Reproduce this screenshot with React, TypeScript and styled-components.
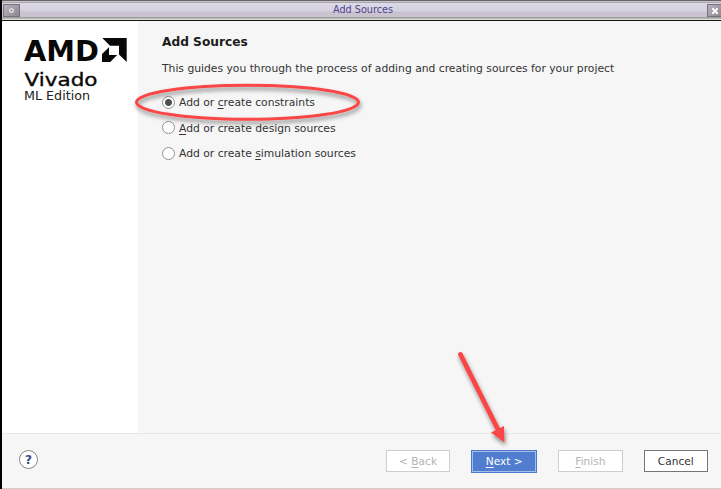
import React from "react";
import styled, { createGlobalStyle } from "styled-components";

const GlobalStyle = createGlobalStyle`
  * { box-sizing: border-box; }
  body { margin: 0; overflow: hidden; }
`;

const Window = styled.div`
  position: relative;
  display: flex;
  flex-direction: column;
  width: 721px;
  height: 489px;
  border-left: 2px solid #000;
  background: #f6f6f6;
  color: #333;
  font: 10.75px/16px "DejaVu Sans", sans-serif;
  white-space: nowrap;
`;

const TitleBar = styled.header`
  display: flex;
  justify-content: space-between;
  align-items: center;
  height: 21px;
  padding-bottom: 1px;
  background: linear-gradient(
    #666067 0 1px, #c9c5c9 1px 2px, #aaa6ad 2px 3px, #dcdae8 3px, #d3d1df 11px,
    #c8c3ce 12px, #c8c3ce 17px, #a19da1 17px 18px, #b8b5b5 18px 19px, #dedecf 19px 20px, #161616 20px
  );
`;

const WindowTitle = styled.h1`
  margin: 0;
  color: #51438f;
  font-size: 9.7px;
  font-weight: normal;
  line-height: 14px;
`;

const WindowButton = styled.button`
  display: flex;
  align-items: center;
  justify-content: center;
  width: 17px;
  height: 13px;
  margin: 1px 0 0 1px;
  padding: 0;
  border: 1px solid #77727e;
  background: linear-gradient(135deg, #b5b1bd, #8d8993);
`;

const CloseButton = styled(WindowButton)`
  width: 14px;
  border-right: 0;
`;

const Body = styled.main`
  display: flex;
  height: 412px;
`;

const Brand = styled.aside`
  width: 136px;
  background: #fff;
`;

const Content = styled.section`
  padding: 13px 0 0 24px;
`;

const Heading = styled.h2`
  margin: 0;
  color: #1c1c1c;
  font-size: 12.2px;
  line-height: 17px;
`;

const Intro = styled.p`
  margin: 10px 0 0;
`;

const Options = styled.div`
  display: flex;
  flex-direction: column;
  gap: 9.5px;
  margin-top: 17px;
`;

const Option = styled.label`
  display: flex;
  align-items: center;
  gap: 4px;
  height: 16px;
`;

const OptionText = styled.span`
  padding-top: 2px;
`;

const Radio = styled.span<{ $checked?: boolean }>`
  width: 13px;
  height: 13px;
  border: 1px solid #929292;
  border-radius: 50%;
  background: ${(p) => (p.$checked ? "radial-gradient(circle, #505050 0 3px, #fff 4px)" : "#fff")};
`;

const Key = styled.span`
  text-decoration: underline;
  text-decoration-thickness: 1px;
  text-underline-offset: 2px;
`;

const Footer = styled.footer`
  display: flex;
  justify-content: space-between;
  align-items: center;
  height: 56px;
  padding: 0 13px 0 17px;
  border-top: 1px solid #e7e7e7;
  border-bottom: 1px solid #cfcfcf;
`;

const Help = styled.button`
  display: flex;
  align-items: center;
  justify-content: center;
  width: 19px;
  height: 19px;
  margin-top: -3px;
  padding: 0;
  border: 1px solid #858585;
  border-radius: 50%;
  background: #fff;
  color: #344b79;
  font: bold 12px/16px "DejaVu Sans", sans-serif;
`;

const Actions = styled.div`
  display: flex;
  align-items: center;
  gap: 21px;
`;

const Button = styled.button<{ $kind?: "primary" | "disabled" }>`
  width: ${(p) => (p.$kind === "primary" ? 66 : 64.4)}px;
  height: ${(p) => (p.$kind === "primary" ? 23 : 22)}px;
  padding: 0;
  border: 1px solid ${(p) => (p.$kind === "primary" ? "#4a79cc" : p.$kind === "disabled" ? "#cecece" : "#777")};
  background: ${(p) => (p.$kind === "primary" ? "#507dd0" : "#fff")};
  box-shadow: ${(p) => (p.$kind === "primary" ? "inset 0 0 0 1px #a5bee9" : "none")};
  color: ${(p) => (p.$kind === "primary" ? "#fff" : p.$kind === "disabled" ? "#b3b3b3" : "#333")};
  font: 10.6px/18px "DejaVu Sans", sans-serif;
`;

const Annotations = styled.svg`
  position: absolute;
  left: -2px;
  top: 0;
  pointer-events: none;
`;

const Logo = () => (
  <svg width="136" height="90" viewBox="2 21 136 90" fill="#080808">
    <text x="24" y="61" fontFamily="DejaVu Sans, sans-serif" fontWeight="700" fontSize="29" textLength="75" lengthAdjust="spacingAndGlyphs">AMD</text>
    <path d="M102.3 38h24.4v24l-7.7-7.5v-8.8h-9zM109 47.3v7.7h8.2l-7 7h-8.2v-8z" />
    <text x="24.5" y="86" fontFamily="DejaVu Sans, sans-serif" fontSize="18.5" stroke="#080808" strokeWidth=".35" textLength="73" lengthAdjust="spacingAndGlyphs">Vivado</text>
    <text x="24" y="100" fontFamily="DejaVu Sans, sans-serif" fontSize="11.5" fill="#222" textLength="66" lengthAdjust="spacingAndGlyphs">ML Edition</text>
  </svg>
);

export default function App() {
  return (
    <Window>
      <GlobalStyle />
      <TitleBar>
        <WindowButton aria-label="Window menu">
          <svg width="7" height="7"><circle cx="3.5" cy="3.5" r="1.7" fill="#777" stroke="#eee" strokeWidth="1.3" /></svg>
        </WindowButton>
        <WindowTitle>Add Sources</WindowTitle>
        <CloseButton aria-label="Close">
          <svg width="8" height="8"><path d="m1.3 1.3 5.4 5.4m0-5.4-5.4 5.4" stroke="#fff" strokeWidth="2" /></svg>
        </CloseButton>
      </TitleBar>
      <Body>
        <Brand><Logo /></Brand>
        <Content>
          <Heading>Add Sources</Heading>
          <Intro>This guides you through the process of adding and creating sources for your project</Intro>
          <Options>
            <Option><Radio $checked /><OptionText>Add or <Key>c</Key>reate constraints</OptionText></Option>
            <Option><Radio /><OptionText><Key>A</Key>dd or create design sources</OptionText></Option>
            <Option><Radio /><OptionText>Add or create <Key>s</Key>imulation sources</OptionText></Option>
          </Options>
        </Content>
      </Body>
      <Footer>
        <Help aria-label="Help">?</Help>
        <Actions>
          <Button $kind="disabled">&lt; <Key>B</Key>ack</Button>
          <Button $kind="primary"><Key>N</Key>ext &gt;</Button>
          <Button $kind="disabled"><Key>F</Key>inish</Button>
          <Button>Cancel</Button>
        </Actions>
      </Footer>
      <Annotations width="721" height="489">
        <defs>
          <filter id="shadow" x="-20%" y="-20%" width="140%" height="150%">
            <feDropShadow dx="1" dy="3" stdDeviation="2" floodColor="#000" floodOpacity=".45" />
          </filter>
        </defs>
        <g filter="url(#shadow)">
          <ellipse cx="247.5" cy="102.3" rx="111" ry="17" fill="none" stroke="#f94747" strokeWidth="3" />
        </g>
        <g filter="url(#shadow)">
          <path d="m460.5 354.5 38 76" stroke="#f94747" strokeWidth="4.8" strokeLinecap="round" />
          <path d="m504.5 442.5-13.5-10 13-6.5z" fill="#f94747" />
        </g>
      </Annotations>
    </Window>
  );
}
